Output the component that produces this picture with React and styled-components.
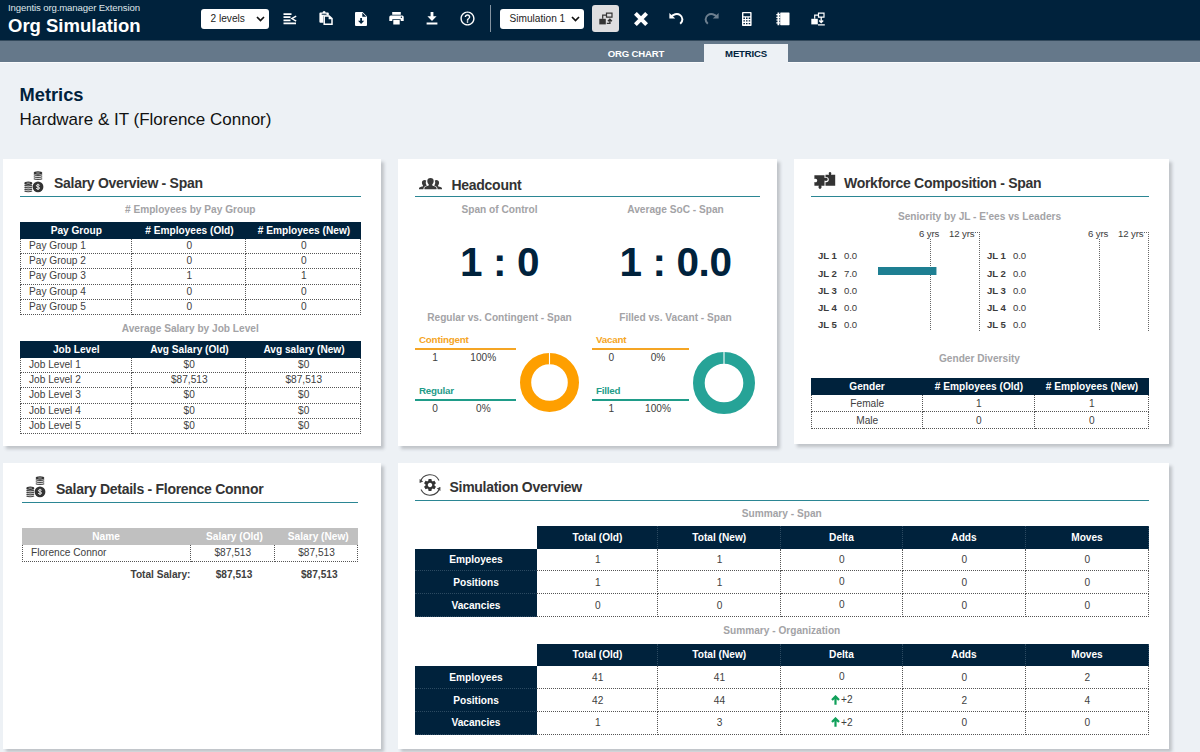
import React, { useState } from "react";
import styled, { createGlobalStyle } from "styled-components";
import { MdHelpOutline, MdSettings } from "react-icons/md";

const Colours = {
  navy: '#00223c',
  slate: '#65788a',
  page: '#edf1f5',
  line: '#2b8694',
  teal: '#26a397',
  orange: '#fe9f00',
  label: '#a3a3a6',
  text: '#404040'
};

/* ---------- data ---------- */

const payGroups = [
  ['Pay Group 1', '0', '0'],
  ['Pay Group 2', '0', '0'],
  ['Pay Group 3', '1', '1'],
  ['Pay Group 4', '0', '0'],
  ['Pay Group 5', '0', '0']
];

const jobLevels = [
  ['Job Level 1', '$0', '$0'],
  ['Job Level 2', '$87,513', '$87,513'],
  ['Job Level 3', '$0', '$0'],
  ['Job Level 4', '$0', '$0'],
  ['Job Level 5', '$0', '$0']
];

const genders = [
  ['Female', '1', '1'],
  ['Male', '0', '0']
];

const summaryHead = ['Total (Old)', 'Total (New)', 'Delta', 'Adds', 'Moves'];

const summarySpan = [
  ['Employees', '1', '1', '0', '0', '0'],
  ['Positions', '1', '1', '0', '0', '0'],
  ['Vacancies', '0', '0', '0', '0', '0']
];

const summaryOrg = [
  ['Employees', '41', '41', '0', '0', '2'],
  ['Positions', '42', '44', '+2', '2', '4'],
  ['Vacancies', '1', '3', '+2', '0', '0']
];

/* ---------- icons ---------- */

const LevelsIcon = () => (
  <svg width="14" height="12" viewBox="0 0 14 12" fill="none" stroke="#fff">
    <path d="M0.5 1.2h8M0.5 4.2h7M0.5 7.3h7M0.5 10.4h12.5" strokeWidth="1.7" />
    <path d="M13.2 3.200L8.800 5.600l4.400 2.600" strokeWidth="1.400" />
  </svg>
);

const PasteIcon = () => (
  <svg width="14" height="15" viewBox="0 0 14 15">
    <path fill="#fff" d="M1.400 1.600h2.200a1.500 1.500 0 0 1 3 0h2.200a1 1 0 0 1 1 1v2H5.500a1.200 1.200 0 0 0-1.200 1.200v6H1.400a1 1 0 0 1-1-1V2.600a1 1 0 0 1 1-1z" />
    <path fill={Colours.navy} d="M2.700 2.700h4.800v1H2.700z" />
    <path fill={Colours.navy} stroke="#fff" strokeWidth="1.500" d="M5.200 4.900h5l2.800 2.700v5.700H5.200z" />
    <path fill="#fff" d="M9.600 4.500v3.700h3.700z" />
  </svg>
);

const FileDownIcon = () => (
  <svg width="12" height="14" viewBox="0 0 12 14">
    <path fill="#fff" d="M1 0h6.600L12 4.400V13a1 1 0 0 1-1 1H1a1 1 0 0 1-1-1V1a1 1 0 0 1 1-1z" />
    <path fill={Colours.navy} d="M7.300.8v4h4zM5.200 6h1.800v2.700h2.200L6.100 12 3 8.700h2.200z" />
  </svg>
);

const PrintIcon = () => (
  <svg width="15" height="13" viewBox="0 0 15 13">
    <path fill="#fff" d="M3.200 0h8.600v2.800H3.200zM1.800 3.600h11.400a1.500 1.500 0 0 1 1.500 1.500v4h-3V7.300H3.300v1.800h-3v-4a1.500 1.500 0 0 1 1.500-1.500zM4.300 8.100h6.400v4.500H4.300z" />
    <circle cx="12.400" cy="5.300" r=".7" fill={Colours.navy} />
  </svg>
);

const DownloadIcon = () => (
  <svg width="12" height="13" viewBox="0 0 12 13" fill="#fff">
    <path d="M4.600 0h2.800v4.200h3.200L6 8.900 1.400 4.200h3.200zM.6 10.400h10.800v2.200H.6z" />
  </svg>
);

const OrgIcon = ({ color, fill, down }) => (
  <svg width="14" height="14" viewBox="0 0 14 14" fill="none" stroke={color}>
    <path d="M7.500 1.200h5.500v4H7.500zM7.500 3.200H3.700v3.500" strokeWidth="1.200" />
    <path d="M.3 6.800h6.500v5.600H.3z" fill={fill || color} stroke="none" />
    {down
      ? <path d="M10.200 5v5.500M8.200 8.500l2 2 2-2M7 12.900h6.800" strokeWidth="1.300" />
      : <path d="M7.800 11.400h3.100V7.600M8.900 9.200l2-2 2 2" strokeWidth="1.400" />}
  </svg>
);

const CrossIcon = () => (
  <svg width="14" height="14" viewBox="0 0 14 14" stroke="#fff" strokeWidth="4">
    <path d="M1.400 1.400l11.200 11.200M12.600 1.400L1.400 12.600" />
  </svg>
);

const UndoIcon = ({ color, flip }) => (
  <svg width="15" height="13" viewBox="0 0 15 13" fill="none" stroke={color}
    transform={flip ? 'scale(-1 1)' : undefined}>
    <path d="M1.600 5.200C4 2.200 8.200 1 11 3c3.100 2.100 3.200 6.300.2 8.800" strokeWidth="2" />
    <path d="M.4.900v5.500h5.800z" fill={color} stroke="none" />
  </svg>
);

const CalcIcon = () => (
  <svg width="10" height="14" viewBox="0 0 10 14">
    <rect width="9.600" height="14" rx="0.800" fill="#fff" />
    <path fill={Colours.navy} d="M1.400 1.300h6.800v2.900H1.400zM1.400 5.600h1.500v1.400H1.400zM4 5.600h1.500v1.400H4zM6.700 5.600h1.500v1.400H6.700zM1.400 8.200h1.500v1.400H1.400zM4 8.200h1.500v1.400H4zM6.700 8.200h1.500v1.400H6.700zM1.400 10.900h1.500v1.400H1.400zM4 10.900h1.500v1.400H4zM6.700 10.900h1.500v1.400H6.700z" />
  </svg>
);

const NotebookIcon = () => (
  <svg width="14" height="14" viewBox="0 0 14 14" fill="#fff">
    <rect x="4.200" y="0.500" width="9.300" height="12.700" rx="0.600" />
    <path d="M1.500.5h1.800v12.700H1.500zM.3 2h4v1.200h-4zM.3 4.700h4v1.200h-4zM.3 7.400h4v1.200h-4zM.3 10.200h4v1.200h-4z" />
  </svg>
);

const CoinsIcon = () => (
  <svg width="20" height="22" viewBox="0 0 20 22">
    <g fill="#333">
      <ellipse cx="14" cy="2" rx="4.300" ry="1.700" />
      <ellipse cx="4.300" cy="12.200" rx="4" ry="1.700" />
      <circle cx="14" cy="15.900" r="5.400" />
    </g>
    <g fill="none" stroke="#444" strokeWidth="1.200">
      <path d="M9.800 3.600c1 1.100 7.400 1.100 8.400 0M9.800 5.600c1 1.100 7.400 1.100 8.400 0M9.800 7.600c1 1.100 7.400 1.100 8.400 0" />
      <path d="M.5 14c1 1.100 6.500 1.100 7.500 0M.5 16c1 1.100 6.500 1.100 7.500 0M.5 18c1 1.100 6.500 1.100 7.500 0M.5 19.900c1 1.100 6.500 1.100 7.500 0" />
    </g>
    <path fill="none" stroke="#eee" strokeWidth="1" d="M15.700 14.300c-1.200-1-3.400-.8-3.300.5 0 1.400 3.200.7 3.200 2.200 0 1.300-2.300 1.500-3.500.3M14 12.800v6.200" />
    <path stroke="#ddd" strokeWidth=".7" d="M12.300 2h3.400M2.600 12.200h3.300" />
  </svg>
);

const PeopleIcon = () => (
  <svg width="23" height="12" viewBox="0 0 23 12" fill="#3a3a3a">
    <path d="M11.500 0c2.100 0 3.200 1.300 3.200 3.100 0 1.500-.7 2.600-1.400 3.200v1.100c1.700.6 4.300 1 4.300 2.900v1H5.400v-1c0-1.900 2.600-2.300 4.300-2.900V6.300C9 5.700 8.300 4.600 8.300 3.100 8.300 1.300 9.400 0 11.500 0z" />
    <path d="M7.300 2.600c-1.400-1-4.500-.7-4.400 2.200 0 1.100.4 1.900 1 2.400v1c-1 .7-3.900.6-3.900 2.200v.9h4.400c0-2.300 1.600-3 3.500-3.700C6.400 6.200 6.600 4 7.300 2.600zM15.700 2.600c1.400-1 4.500-.7 4.400 2.200 0 1.100-.4 1.900-1 2.400v1c1 .7 3.900.6 3.900 2.200v.9h-4.400c0-2.300-1.600-3-3.500-3.700 1.500-1.400 1.300-3.600.6-5z" />
  </svg>
);

const PuzzleIcon = () => (
  <svg width="22" height="17" viewBox="0 0 22 17" fill="#333">
    <path d="M.4 3.200h10.100v2.900c1.900-.9 3.200-.2 3.200 1.200s-1.400 2.100-3.200 1.200v5.300H7.200c.9 1.500.2 3.100-1.200 3.100s-2-1.600-1.100-3.100H.4v-3.700c1.700.7 2.800-.1 2.800-1.500S2 6.400.4 7.100z" />
    <path d="M11.500 2.700h3.600c-.8-1.400-.2-2.700.9-2.700s1.800 1.300 1 2.700h4.200v11.100h-9.700v-3.600c1.900.4 3.300-.8 3.300-2.700 0-1.700-1.400-2.900-3.300-2.500z" />
  </svg>
);

const CycleGearIcon = () => (
  <svg width="22" height="22" viewBox="0 0 22 22" fill="none" stroke="#444">
    <path d="M1.300 8.200A10 10 0 0 1 20 6.500M20.700 13.500A10 10 0 0 1 2 15.600" strokeWidth="1.100" />
    <path d="M.6 5v4l3.600-1.600zM21.400 17v-4l-3.600 1.600z" fill="#444" stroke="none" />
    <MdSettings x="3.500" y="3.500" size={15} color="#333" />
  </svg>
);

const UpArrow = () => (
  <svg width="9" height="10" viewBox="0 0 9 10" fill="none" stroke="#10a05a" strokeWidth="2.200">
    <path d="M4.500 9.700V1.500M1 5.100l3.500-3.600L8 5.100" />
  </svg>
);

/* ---------- parts ---------- */

function Picker({ value, width }) {
  return (
    <PickerBox $width={width}>
      {value}
      <svg width="9" height="6" viewBox="0 0 9 6" fill="none" stroke="#111" strokeWidth="1.700">
        <path d="M1 1l3.500 3.500L8 1" />
      </svg>
    </PickerBox>
  );
}

function DataTable({ columns, head, rows, headHeight = 17, rowHeight = 15.2, centered }) {
  return (
    <Table $columns={columns}>
      {head.map(h => <HeadCell key={h} $height={headHeight}>{h}</HeadCell>)}
      {rows.map(row => row.map((cell, i) => (
        <Cell
          key={row[0] + i}
          $height={rowHeight}
          $first={i === 0}
          $left={i === 0 && !centered}
          $raised={!centered}
        >
          {cell}
        </Cell>
      )))}
    </Table>
  );
}

function SummaryTable({ rows }) {
  return (
    <Table $columns="122px 121px 122.5px 122px 123px 123px">
      <span />
      {summaryHead.map(h => <HeadCell key={h} $height={22.6} $split>{h}</HeadCell>)}
      {rows.map(row => row.map((cell, i) => (
        i === 0
          ? <RowHead key={row[0]}>{cell}</RowHead>
          : (
            <Cell key={row[0] + i} $height={22.9} $raised={i === 3}>
              {cell.startsWith('+') && <UpArrow />}
              {cell}
            </Cell>
          )
      )))}
    </Table>
  );
}

function Donut({ size, inner, color }) {
  const r = size / 2;
  const ring = r - inner;
  return (
    <svg width={size} height={size} viewBox={`0 0 ${size} ${size}`} fill="none">
      <circle cx={r} cy={r} r={inner + ring / 2} stroke={color} strokeWidth={ring} />
      <path d={`M${r} 0v${ring + 0.5}`} stroke="#fff" strokeWidth="1.100" />
    </svg>
  );
}

function Share({ label, count, percent, color }) {
  return (
    <ShareBox>
      <ShareLabel $color={color}>{label}</ShareLabel>
      <ShareValues><span>{count}</span><span>{percent}</span></ShareValues>
    </ShareBox>
  );
}

function SeniorityChart({ values }) {
  return (
    <Chart width="169" height="106" viewBox="0 0 169 106">
      <text x="108" y="11.500">6 yrs</text>
      <text x="138" y="11.500">12 yrs</text>
      <g stroke="#666" strokeDasharray="1 1">
        <path d="M119.500 14v92M168.500 7v99M164 7.500h5" />
      </g>
      {values.map((v, i) => (
        <g key={i}>
          <text x="7" y={34.400 + i * 17.100} fontWeight="bold">JL {i + 1}</text>
          <text x="33" y={34.400 + i * 17.100}>{v.toFixed(1)}</text>
          {v > 0 && <rect x="67" y={24.900 + i * 17.100} width={v * 8.350} height="8" fill="#1e7f92" />}
        </g>
      ))}
    </Chart>
  );
}

export default function App() {
  const [tab, setTab] = useState('METRICS');

  return (
    <Page>
      <GlobalStyle />
      <TopBar>
        <Brand>
          <Product>Ingentis org.manager Extension</Product>
          <AppName>Org Simulation</AppName>
        </Brand>
        <Picker value="2 levels" width={67.500} />
        <Tools $gap={4}>
          <Tool><LevelsIcon /></Tool>
          <Tool><PasteIcon /></Tool>
          <Tool><FileDownIcon /></Tool>
          <Tool><PrintIcon /></Tool>
          <Tool><DownloadIcon /></Tool>
          <Tool><MdHelpOutline size={17} /></Tool>
        </Tools>
        <Divider />
        <Picker value="Simulation 1" width={83.500} />
        <Toggle><OrgIcon color="#333" /></Toggle>
        <Tools $gap={4}>
          <Tool><CrossIcon /></Tool>
          <Tool><UndoIcon color="#fff" /></Tool>
          <Tool><UndoIcon color="#6c7f8f" flip /></Tool>
          <Tool><CalcIcon /></Tool>
          <Tool><NotebookIcon /></Tool>
          <Tool><OrgIcon color="#fff" down /></Tool>
        </Tools>
      </TopBar>
      <TabBar>
        {['ORG CHART', 'METRICS'].map(name => (
          <Tab key={name} $active={tab === name} onClick={() => setTab(name)}>{name}</Tab>
        ))}
      </TabBar>

      <Heading>
        <h1>Metrics</h1>
        <p>Hardware &amp; IT (Florence Connor)</p>
      </Heading>

      <Board>
        <Card $left={16.500} $right={20}>
          <CardHead $indent={4.500} $gap={10} $base={3.500}>
            <CoinsIcon /><CardTitle $lift={1.500}>Salary Overview - Span</CardTitle>
          </CardHead>
          <SubTitle $height={25} $top={4}># Employees by Pay Group</SubTitle>
          <DataTable
            columns="112.5px 114px 115px"
            head={['Pay Group', '# Employees (Old)', '# Employees (New)']}
            rows={payGroups}
          />
          <SubTitle $height={26} $top={5}>Average Salary by Job Level</SubTitle>
          <DataTable
            columns="112.5px 114px 115px"
            head={['Job Level', 'Avg Salary (Old)', 'Avg salary (New)']}
            rows={jobLevels}
          />
        </Card>

        <Card $left={17} $right={17}>
          <CardHead $indent={4} $gap={9.500} $base={6}>
            <PeopleIcon /><CardTitle $lift={-3}>Headcount</CardTitle>
          </CardHead>
          <Ratios>
            <div>
              <SubTitle $height={25}>Span of Control</SubTitle>
              <Ratio>1 : 0</Ratio>
            </div>
            <div>
              <SubTitle $height={25}>Average SoC - Span</SubTitle>
              <Ratio>1 : 0.0</Ratio>
            </div>
            <div>
              <SubTitle $height={24} $top={4}>Regular vs. Contingent - Span</SubTitle>
              <Split $list={100.500} $gap={4}>
                <div>
                  <Share label="Contingent" count="1" percent="100%" color="#f5a524" />
                  <Share label="Regular" count="0" percent="0%" color="#1f9c89" />
                </div>
                <Donut size={59} inner={18.300} color={Colours.orange} />
              </Split>
            </div>
            <div>
              <SubTitle $height={24} $top={4}>Filled vs. Vacant - Span</SubTitle>
              <Split $list={97} $gap={4}>
                <div>
                  <Share label="Vacant" count="0" percent="0%" color="#f5a524" />
                  <Share label="Filled" count="1" percent="100%" color="#1f9c89" />
                </div>
                <Donut size={62} inner={19.300} color={Colours.teal} />
              </Split>
            </div>
          </Ratios>
        </Card>

        <Card $left={16.500} $right={20.500} $short>
          <CardHead $indent={3.500} $gap={8} $base={7}>
            <PuzzleIcon /><CardTitle $lift={-2}>Workforce Composition - Span</CardTitle>
          </CardHead>
          <SubTitle $height={28} $top={10.500}>Seniority by JL - E'ees vs Leaders</SubTitle>
          <Charts>
            <SeniorityChart values={[0, 7, 0, 0, 0]} />
            <SeniorityChart values={[0, 0, 0, 0, 0]} />
          </Charts>
          <SubTitle $height={47} $top={19}>Gender Diversity</SubTitle>
          <DataTable
            columns="112px 112px 114px"
            head={['Gender', '# Employees (Old)', '# Employees (New)']}
            rows={genders}
            rowHeight={17}
            centered
          />
        </Card>

        <Card $left={18.500} $right={23}>
          <CardHead $height={40} $indent={4.500} $gap={10} $base={4}>
            <CoinsIcon /><CardTitle $lift={1}>Salary Details - Florence Connor</CardTitle>
          </CardHead>
          <Details>
            <GreyCell>Name</GreyCell>
            <GreyCell $shift={4}>Salary (Old)</GreyCell>
            <GreyCell $shift={4}>Salary (New)</GreyCell>
            <Cell $height={17} $first $left $raised>Florence Connor</Cell>
            <Cell $height={17} $raised>$87,513</Cell>
            <Cell $height={17} $raised>$87,513</Cell>
            <Total $right>Total Salary:</Total>
            <Total $shift={3}>$87,513</Total>
            <Total $shift={6}>$87,513</Total>
          </Details>
        </Card>

        <Card $left={17} $right={20.500} $wide>
          <CardHead $height={38} $indent={3.500} $gap={9} $base={4}>
            <CycleGearIcon /><CardTitle $lift={1.500}>Simulation Overview</CardTitle>
          </CardHead>
          <SubTitle $height={25}>Summary - Span</SubTitle>
          <SummaryTable rows={summarySpan} />
          <SubTitle $height={26.400} $top={5}>Summary - Organization</SubTitle>
          <SummaryTable rows={summaryOrg} />
        </Card>
      </Board>
    </Page>
  );
}

/* ---------- styles ---------- */

const GlobalStyle = createGlobalStyle`
  * {
    box-sizing: border-box;
  }
  body {
    margin: 0;
    overflow: hidden;
    background: ${Colours.page};
  }
`;

const Page = styled.div`
  width: 1200px;
  height: 752px;
  overflow: hidden;
  font-family: "Liberation Sans", Arial, sans-serif;
  font-size: 10.15px;
  color: ${Colours.text};
  background: ${Colours.page};
`;

const TopBar = styled.header`
  display: flex;
  height: 41px;
  padding-left: 8px;
  color: #fff;
  background: ${Colours.navy};
  border-bottom: 1px solid #33495c;
`;

const Brand = styled.div`
  width: 193px;
  white-space: nowrap;
`;

const Product = styled.div`
  margin-top: 2px;
  font-size: 9.6px;
  line-height: 12px;
  letter-spacing: -0.12px;
  color: #dfe5ea;
`;

const AppName = styled.div`
  margin-top: 1px;
  font-size: 18.5px;
  line-height: 22px;
  font-weight: bold;
`;

const PickerBox = styled.div`
  display: flex;
  align-items: center;
  justify-content: space-between;
  width: ${p => p.$width}px;
  height: 20px;
  margin-top: 8.5px;
  padding: 0 4px 0 9.5px;
  border-radius: 3px;
  color: #222;
  background: #fff;
`;

const Tools = styled.div`
  display: flex;
  height: 37px;
  margin-left: ${p => p.$gap}px;
`;

const Tool = styled.button`
  display: flex;
  align-items: center;
  justify-content: center;
  width: 35.5px;
  padding: 0;
  border: none;
  color: #fff;
  background: none;
  cursor: pointer;
`;

const Divider = styled.div`
  width: 1px;
  height: 27px;
  margin: 5px 9px 0 4.5px;
  background: #8594a1;
`;

const Toggle = styled.button`
  display: flex;
  align-items: center;
  justify-content: center;
  width: 27px;
  height: 27px;
  margin: 5px 0 0 8.5px;
  padding: 0;
  border: none;
  border-radius: 3px;
  background: #dedee0;
`;

const TabBar = styled.nav`
  display: flex;
  align-items: flex-end;
  height: 22px;
  padding-left: 568px;
  background: ${Colours.slate};
  border-bottom: 1px solid #fafbfc;
`;

const Tab = styled.button`
  width: ${p => p.$active ? 84 : 136}px;
  height: ${p => p.$active ? 19 : 18}px;
  margin-bottom: ${p => p.$active ? -1 : 0}px;
  padding: 0;
  border: none;
  font: bold 9.6px "Liberation Sans", Arial, sans-serif;
  letter-spacing: -0.2px;
  color: ${p => p.$active ? Colours.navy : '#fff'};
  background: ${p => p.$active ? Colours.page : 'none'};
  cursor: pointer;
`;

const Heading = styled.div`
  height: 96px;
  padding: 21px 0 0 19.5px;
  h1 {
    margin: 0;
    font-size: 18.3px;
    line-height: 22px;
    color: ${Colours.navy};
  }
  p {
    margin: 3px 0 0;
    font-size: 17px;
    line-height: 22px;
    color: #111;
  }
`;

const Board = styled.main`
  display: grid;
  grid-template-columns: 378px 379px 375px;
  grid-template-rows: 287px 286px;
  gap: 17px;
  padding-left: 3px;
`;

const Card = styled.section`
  height: ${p => p.$short ? '285px' : '100%'};
  grid-column: ${p => p.$wide ? 'span 2' : 'auto'};
  padding: 0 ${p => p.$right}px 0 ${p => p.$left}px;
  background: #fff;
  box-shadow: 3px 3px 3px rgba(60, 65, 75, 0.26);
`;

const CardHead = styled.div`
  display: flex;
  align-items: flex-end;
  gap: ${p => p.$gap}px;
  height: ${p => p.$height || 38}px;
  padding: 0 0 ${p => p.$base}px ${p => p.$indent}px;
  border-bottom: 1px solid ${Colours.line};
  svg {
    flex: none;
  }
`;

const CardTitle = styled.h2`
  margin: 0 0 ${p => p.$lift || 0}px;
  font-size: 14px;
  line-height: 16px;
  letter-spacing: -0.28px;
  color: #333;
  white-space: nowrap;
`;

const SubTitle = styled.h3`
  height: ${p => p.$height}px;
  margin: 0;
  padding-top: ${p => p.$top || 0}px;
  line-height: ${p => p.$top ? 18 : p.$height}px;
  font-size: 10.15px;
  text-align: center;
  color: ${Colours.label};
`;

const Table = styled.div`
  display: grid;
  grid-template-columns: ${p => p.$columns};
`;

const HeadCell = styled.div`
  display: flex;
  align-items: center;
  justify-content: center;
  height: ${p => p.$height}px;
  padding-left: 1px;
  font-weight: bold;
  color: #fff;
  background: ${Colours.navy};
  border-right: ${p => p.$split ? '1px dotted #2c4a61' : 'none'};
`;

const RowHead = styled.div`
  display: flex;
  align-items: center;
  justify-content: center;
  font-weight: bold;
  color: #fff;
  background: ${Colours.navy};
  border-bottom: 1px dotted #2c4a61;
`;

const Cell = styled.div`
  display: flex;
  align-items: center;
  justify-content: ${p => p.$left ? 'flex-start' : 'center'};
  gap: 1px;
  height: ${p => p.$height}px;
  padding-left: ${p => p.$left ? 8.5 : 1.5}px;
  padding-bottom: ${p => p.$raised ? 1 : 0}px;
  border-right: 1px dotted #555;
  border-bottom: 1px dotted #555;
  border-left: ${p => p.$first ? '1px dotted #555' : 'none'};
`;

const Ratios = styled.div`
  display: grid;
  grid-template-columns: 169px 167px;
  column-gap: 8px;
`;

const Ratio = styled.div`
  height: 83px;
  font-size: 40.5px;
  line-height: 81px;
  letter-spacing: -0.4px;
  font-weight: bold;
  text-align: center;
  color: ${Colours.navy};
`;

const Split = styled.div`
  display: grid;
  grid-template-columns: ${p => p.$list}px auto;
  column-gap: ${p => p.$gap}px;
  justify-content: start;
  align-items: center;
  height: 107px;
`;

const ShareBox = styled.div`
  height: 51px;
`;

const ShareLabel = styled.div`
  height: 18px;
  padding-left: 4px;
  font-size: 9.8px;
  line-height: 16px;
  letter-spacing: -0.22px;
  font-weight: bold;
  color: ${p => p.$color};
  border-bottom: 2px solid ${p => p.$color};
`;

const ShareValues = styled.div`
  display: grid;
  grid-template-columns: 40% 56%;
  line-height: 15px;
  text-align: center;
`;

const Charts = styled.div`
  display: flex;
`;

const Chart = styled.svg`
  flex: none;
  text {
    font-size: 9.6px;
    letter-spacing: -0.1px;
    fill: #3c3c3c;
  }
`;

const Details = styled.div`
  display: grid;
  grid-template-columns: 169px 84px 83.5px;
  margin-top: 25px;
`;

const GreyCell = styled.div`
  display: flex;
  align-items: center;
  justify-content: center;
  height: 17px;
  padding-left: ${p => p.$shift || 0}px;
  font-weight: bold;
  color: #fff;
  background: #c0c0c0;
`;

const Total = styled.div`
  padding: ${p => p.$right ? 0 : 2}px;
  padding-left: ${p => (p.$shift || 0) + 2}px;
  line-height: ${p => p.$right ? 25 : 21}px;
  font-weight: bold;
  text-align: ${p => p.$right ? 'right' : 'center'};
`;
